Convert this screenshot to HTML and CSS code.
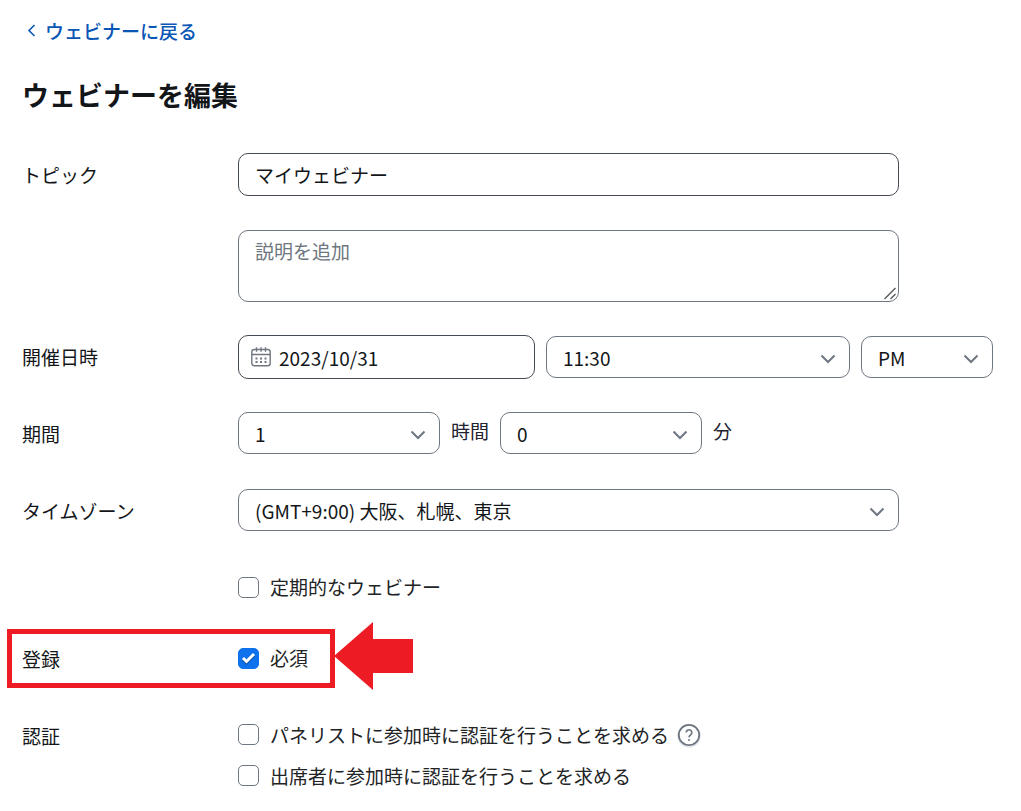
FILE: index.html
```html
<!DOCTYPE html>
<html lang="ja">
<head>
    <meta charset="UTF-8">
    <meta name="viewport" content="width=device-width, initial-scale=1.0">
    <title>ウェビナーを編集</title>
    <link rel="stylesheet" href="styles.css">
</head>
<body>

    <div class="page">
        <a class="back-link" href="#">
            <svg width="9" height="14" viewBox="0 0 9 14" fill="none" stroke="currentColor" stroke-width="1.6" aria-hidden="true">
                <path d="M7.5 1L2 6.500l5.500 5.500"/>
            </svg>
            ウェビナーに戻る
        </a>

        <h1>ウェビナーを編集</h1>

        <form>
            <div class="row">
                <label class="label" for="topic">トピック</label>
                <div class="field">
                    <input type="text" id="topic" class="control topic wide" value="マイウェビナー">
                </div>
            </div>

            <div class="row">
                <div class="field">
                    <textarea class="control wide" placeholder="説明を追加" aria-label="説明を追加"></textarea>
                </div>
            </div>

            <div class="row">
                <label class="label" for="date">開催日時</label>
                <div class="field datetime">
                    <div class="control date-box">
                        <svg width="20" height="20" viewBox="0 0 20 20" fill="none" stroke="#6e7680" stroke-width="1.4" aria-hidden="true">
                            <rect x="0.8" y="2.5" width="18.4" height="16.2" rx="2.5"/>
                            <path d="M1 7.5h18M5.5 0.3v4.4M10 0.3v4.4M14.5 0.3v4.4"/>
                            <path d="M4.5 11.5h2M9 11.5h2M13.5 11.5h2M4.5 15h2M9 15h2M13.5 15h2" stroke-width="2"/>
                        </svg>
                        <input type="text" id="date" value="2023/10/31">
                    </div>
                    <select class="control" aria-label="時刻">
                        <option>11:30</option>
                    </select>
                    <select class="control" aria-label="午前・午後">
                        <option>PM</option>
                        <option>AM</option>
                    </select>
                </div>
            </div>

            <div class="row">
                <label class="label" for="hours">期間</label>
                <div class="field">
                    <select class="control short" id="hours">
                        <option>1</option>
                    </select>
                    <label class="unit" for="hours">時間</label>
                    <select class="control short" id="minutes">
                        <option>0</option>
                    </select>
                    <label class="unit" for="minutes">分</label>
                </div>
            </div>

            <div class="row">
                <label class="label" for="timezone">タイムゾーン</label>
                <div class="field">
                    <select class="control wide" id="timezone">
                        <option>(GMT+9:00) 大阪、札幌、東京</option>
                    </select>
                </div>
            </div>

            <div class="row">
                <div class="field">
                    <label class="check"><input type="checkbox">定期的なウェビナー</label>
                </div>
            </div>

            <div class="row registration">
                <span class="label">登録</span>
                <div class="field">
                    <label class="check"><input type="checkbox" checked>必須</label>
                </div>
                <div class="highlight">
                    <svg class="arrow" width="79" height="68" viewBox="0 0 79 68" aria-hidden="true">
                        <path d="M0 34L39 0v17h40v34H39v17z" fill="#ed1c24"/>
                    </svg>
                </div>
            </div>

            <div class="row auth">
                <span class="label">認証</span>
                <div class="field stacked">
                    <div class="check-line">
                        <label class="check"><input type="checkbox">パネリストに参加時に認証を行うことを求める</label>
                        <button type="button" class="help" aria-label="ヘルプ">
                            <svg width="24" height="26" viewBox="0 0 24 26" fill="none" aria-hidden="true">
                                <circle cx="12" cy="14" r="11" stroke="#e3e7ec" stroke-width="1.5"/>
                                <circle cx="12" cy="13" r="10.2" stroke="#6e7680" stroke-width="1.8"/>
                                <path d="M9.2 10.6a2.8 2.8 0 1 1 4.5 2.2c-1 .8-1.700 1.300-1.700 2.400" stroke="#6e7680" stroke-width="1.7"/>
                                <circle cx="12" cy="18" r="1" fill="#6e7680"/>
                            </svg>
                        </button>
                    </div>
                    <div class="check-line">
                        <label class="check"><input type="checkbox">出席者に参加時に認証を行うことを求める</label>
                    </div>
                </div>
            </div>
        </form>
    </div>

</body>
</html>
```
FILE: styles.css
```css
* {
    box-sizing: border-box;
}
body {
    margin: 0;
    background-color: #fff;
    color: #131619;
    font-family: "Noto Sans CJK JP", sans-serif;
    font-size: 19px;
}
input, select, textarea {
    font: inherit;
    color: inherit;
}
.page {
    padding: 17px 28px 17px 22px;
}
.back-link {
    display: flex;
    align-items: center;
    gap: 9px;
    width: fit-content;
    padding-left: 5px;
    color: #0956b5;
    font-weight: 500;
    line-height: 28px;
    text-decoration: none;
}
h1 {
    margin: 30px 0 38px;
    font-size: 27px;
    line-height: 40px;
    font-weight: 700;
}
.row {
    display: grid;
    grid-template-columns: 216px minmax(0, 1fr);
    min-height: 44px;
    margin-bottom: 33px;
    position: relative;
}
.label {
    line-height: 44px;
}
.field {
    grid-column: 2;
    display: flex;
    align-items: flex-start;
    gap: 11px;
}
.control {
    height: 42px;
    padding: 0 16px;
    border: 1px solid #6e7680;
    border-radius: 10px;
    background-color: #fff;
}
.wide {
    width: 100%;
    max-width: 661px;
}
.topic {
    height: 43px;
    border-color: #444b53;
}
textarea.control {
    display: block;
    height: 72px;
    padding: 6px 16px;
    line-height: 28px;
    resize: vertical;
}
textarea::placeholder {
    color: #6e7680;
    opacity: 1;
}
textarea::-webkit-resizer {
    background: url("data:image/svg+xml,%3Csvg xmlns='http://www.w3.org/2000/svg' width='15' height='15' viewBox='0 0 15 15' fill='none' stroke='%23555' stroke-width='1.3'%3E%3Cpath d='M1.5 13L12.5 2M7.5 13L12.5 8'/%3E%3C/svg%3E") right bottom no-repeat;
}
select.control {
    appearance: none;
    padding-right: 36px;
    background-image: url("data:image/svg+xml,%3Csvg xmlns='http://www.w3.org/2000/svg' width='16' height='10' viewBox='0 0 16 10' fill='none' stroke='%236e7680' stroke-width='2'%3E%3Cpath d='M1.5 1.5L8 8l6.5-6.5'/%3E%3C/svg%3E");
    background-repeat: no-repeat;
    background-position: right 13px top 17px;
}
.datetime {
    display: grid;
    grid-template-columns: minmax(0, 297fr) minmax(0, 304fr) minmax(0, 132fr);
    align-items: center;
}
.date-box {
    display: flex;
    align-items: center;
    gap: 8px;
    height: 44px;
    padding: 0 12px;
    border-color: #444b53;
}
.date-box svg {
    flex: none;
}
.date-box input {
    width: 100%;
    min-width: 0;
    padding: 0;
    border: 0;
    outline: 0;
    background: none;
}
.short {
    width: 202px;
}
.unit {
    line-height: 38px;
    color: #222230;
}
.check {
    display: flex;
    align-items: center;
    gap: 11px;
    line-height: 42px;
    color: #222325;
}
.check input {
    appearance: none;
    width: 21px;
    height: 21px;
    margin: 0;
    border: 1px solid #6e7680;
    border-radius: 5px;
    background-color: #fff;
}
.check input:checked {
    border-color: #0e72ed;
    background: #0e72ed url("data:image/svg+xml,%3Csvg xmlns='http://www.w3.org/2000/svg' width='15' height='13' viewBox='0 0 15 13' fill='none' stroke-width='3'%3E%3Cpath d='M2 7.5l3.500 3.300L13 3.200' stroke='%230a4fa6'/%3E%3Cpath d='M2 6l3.500 3.500L13 2' stroke='%23fff'/%3E%3C/svg%3E") center no-repeat;
}
.registration {
    margin-top: -6px;
}
/* red frame round the registration row */
.highlight {
    position: absolute;
    top: -8px;
    left: -15px;
    width: 328px;
    height: 59px;
    border: 5px solid #ed1c24;
    pointer-events: none;
}
.arrow {
    position: absolute;
    top: -12px;
    left: 322px;
}
.auth {
    margin-bottom: 0;
}
.stacked {
    flex-direction: column;
    gap: 0;
}
.check-line {
    display: flex;
    align-items: center;
    gap: 8px;
}
.check-line .check {
    line-height: 41px;
    min-height: 40px;
}
.help {
    display: flex;
    padding: 0;
    border: 0;
    background: none;
    cursor: pointer;
}
```
